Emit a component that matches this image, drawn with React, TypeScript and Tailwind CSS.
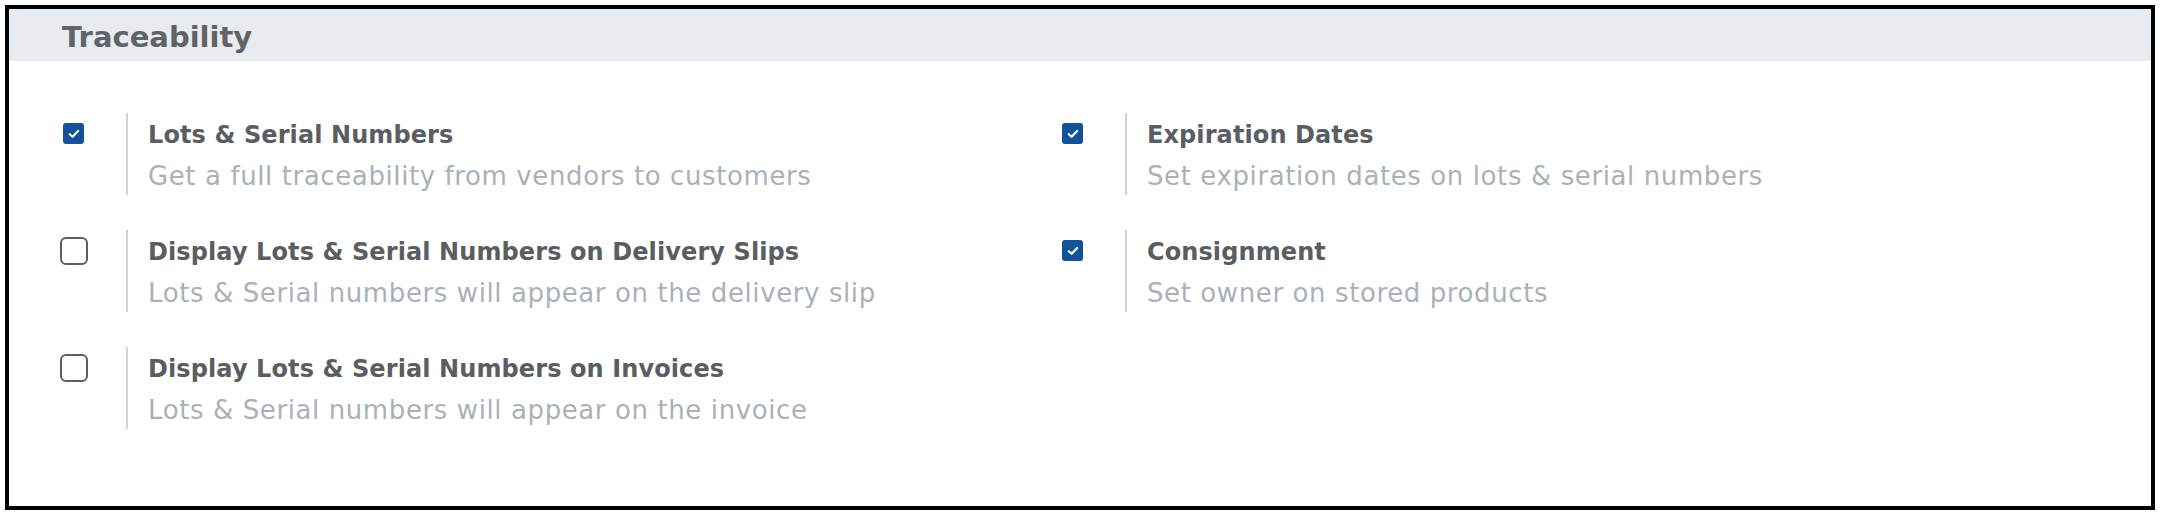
import React from "react";

type Item = { title: string; desc: string; checked: boolean };

const items: Item[] = [
  { title: "Lots & Serial Numbers", desc: "Get a full traceability from vendors to customers", checked: true },
  { title: "Expiration Dates", desc: "Set expiration dates on lots & serial numbers", checked: true },
  { title: "Display Lots & Serial Numbers on Delivery Slips", desc: "Lots & Serial numbers will appear on the delivery slip", checked: false },
  { title: "Consignment", desc: "Set owner on stored products", checked: true },
  { title: "Display Lots & Serial Numbers on Invoices", desc: "Lots & Serial numbers will appear on the invoice", checked: false },
];

function Check({ checked }: { checked: boolean }) {
  if (checked) {
    return (
      <div className="w-[21px] h-[21px] rounded-[3px] bg-[#11529b] flex items-center justify-center">
        <svg width="12" height="10" viewBox="0 0 12 10" fill="none">
          <path d="M1.8 5.2 L4.6 7.8 L10.2 2" stroke="#ffffff" strokeWidth="2.2" strokeLinecap="round" strokeLinejoin="round" />
        </svg>
      </div>
    );
  }
  return <div className="w-[28px] h-[28px] rounded-[6px] border-[2.5px] border-[#5c5f63] bg-white" />;
}

function Row({ item }: { item: Item }) {
  return (
    <div className="flex h-[82px]">
      <div className="w-[47px] h-[41px] flex items-center justify-center">
        <Check checked={item.checked} />
      </div>
      <div className="ml-[29px] w-[2px] self-stretch bg-[#d2d2d2]" />
      <div className="pl-[20px] pt-[7px]">
        <div className="text-[24px] leading-[30px] font-bold tracking-[0.1px] text-[#5a5d62] whitespace-nowrap">{item.title}</div>
        <div className="mt-[11px] text-[26px] leading-[30px] tracking-[0.6px] text-[#aab1b9] whitespace-nowrap">{item.desc}</div>
      </div>
    </div>
  );
}

export default function App() {
  return (
    <div className="w-[2164px] h-[520px] bg-white p-[5px]" style={{ fontFamily: '"DejaVu Sans", sans-serif' }}>
      <div className="h-[505px] w-[2150px] border-4 border-black flex flex-col">
        <div className="h-[52px] bg-[#e9ecef] flex items-center pl-[53px] pt-[5px]">
          <span className="text-[29px] leading-none font-bold text-[#606367]">Traceability</span>
        </div>
        <div className="grid grid-cols-[999px_1fr] gap-y-[35px] pt-[52px] pl-[41px]">
          {items.map((it) => (
            <Row key={it.title} item={it} />
          ))}
        </div>
      </div>
    </div>
  );
}
